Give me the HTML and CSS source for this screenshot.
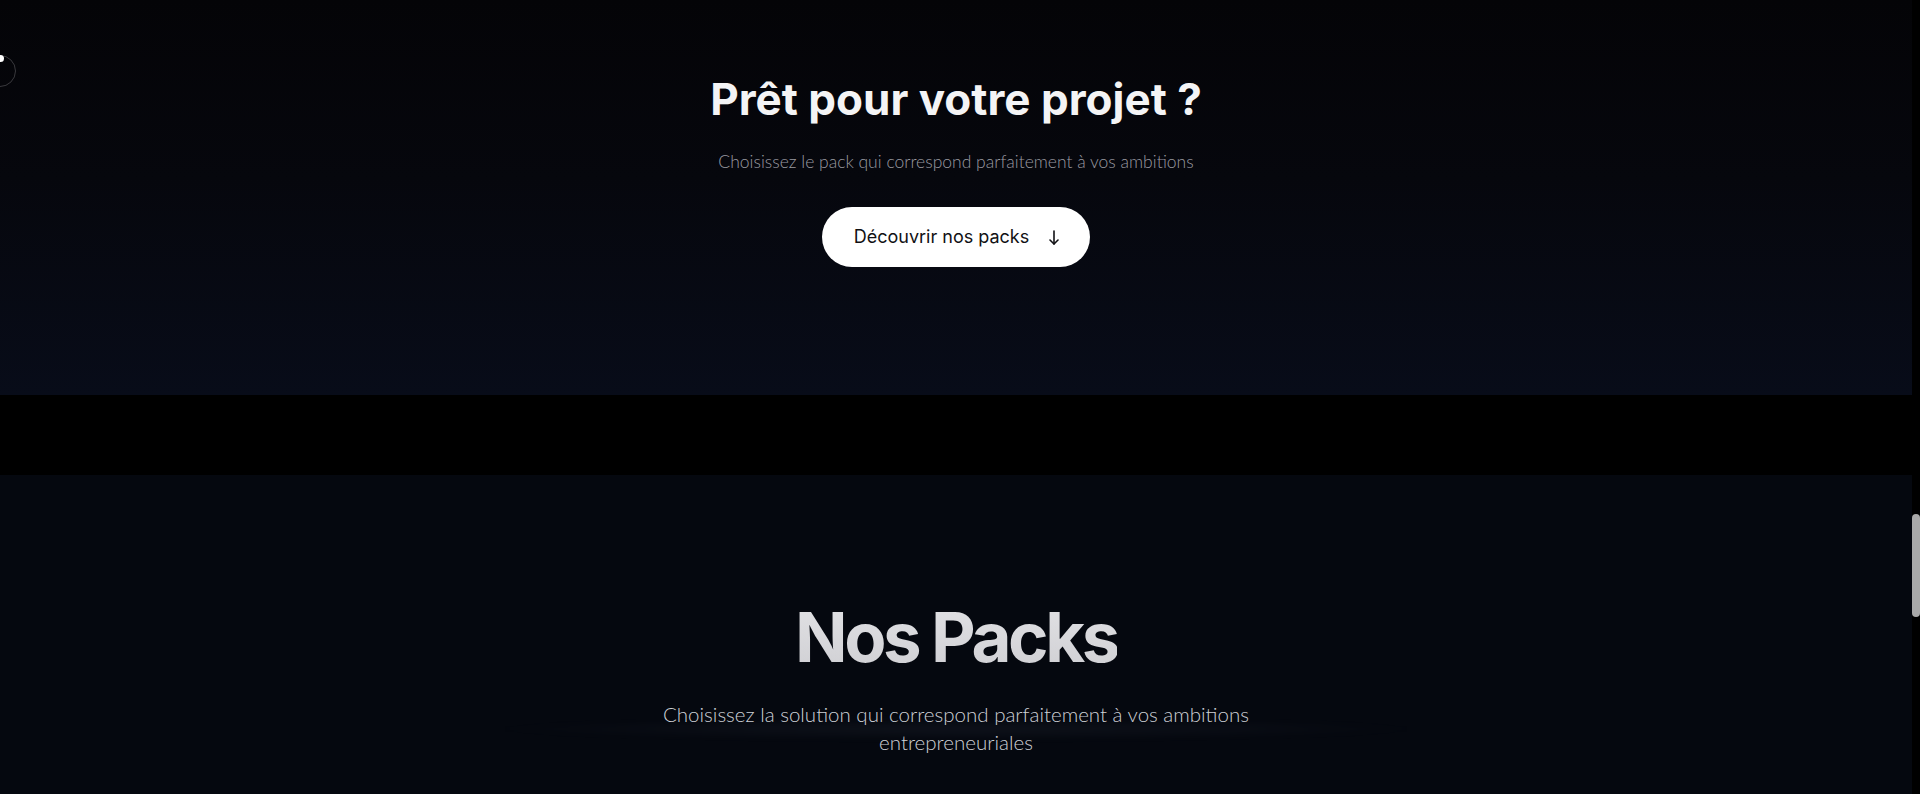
FILE: index.html
```html
<!DOCTYPE html>
<html lang="fr">
<head>
<meta charset="utf-8">
<title>Nos Packs</title>
<link rel="stylesheet" href="styles.css">
</head>
<body>
<div class="page">
  <main class="main">
    <section class="cta">
      <h2 class="cta-title">Prêt pour votre projet ?</h2>
      <p class="cta-sub">Choisissez le pack qui correspond parfaitement à vos ambitions</p>
      <a class="cta-btn" href="#packs">
        <span>Découvrir nos packs</span>
        <svg class="cta-arrow" width="10" height="15" viewBox="0 0 10 15" fill="none" stroke="currentColor" stroke-width="1.6" stroke-linecap="round" stroke-linejoin="round"><path d="M5 1V14"/><path d="M1 10L5 14L9 10"/></svg>
      </a>
    </section>
    <div class="spacer"></div>
    <section class="packs" id="packs">
      <h2 class="packs-title">Nos Packs</h2>
      <div class="packs-sub-wrap">
        <p class="packs-sub">Choisissez la solution qui correspond parfaitement à vos ambitions entrepreneuriales</p>
      </div>
    </section>
  </main>
  <aside class="scrollbar"><div class="thumb"></div></aside>
</div>
<div class="cursor-ring"></div>
<div class="cursor-dot"></div>
</body>
</html>
```
FILE: styles.css
```css
html, body {
  margin: 0;
  padding: 0;
  background: #000;
  height: 794px;
  overflow: hidden;
}

.page {
  display: flex;
  height: 794px;
}

.main {
  flex: 1;
  display: flex;
  flex-direction: column;
  overflow: hidden;
}

.cta {
  height: 395px;
  flex: none;
  box-sizing: border-box;
  padding-top: 73px;
  display: flex;
  flex-direction: column;
  align-items: center;
  background: linear-gradient(to bottom, #040407 0%, #06070d 45%, #080c19 100%);
}

.cta-title {
  margin: 0;
  font-family: "Inter", "Liberation Sans", sans-serif;
  font-weight: 700;
  font-size: 44px;
  line-height: 52px;
  color: #f4f4f5;
}

.cta-sub {
  margin: 23px 0 0;
  font-family: "Lato", "Liberation Sans", sans-serif;
  font-weight: 300;
  font-size: 17.5px;
  line-height: 28px;
  color: #9a9aa1;
}

.cta-btn {
  margin-top: 31px;
  height: 60px;
  box-sizing: border-box;
  padding: 0 31px 0 32px;
  display: flex;
  align-items: center;
  gap: 20px;
  background: #fff;
  border-radius: 999px;
  color: #111114;
  text-decoration: none;
  font-family: "Inter", "Liberation Sans", sans-serif;
  font-weight: 400;
  font-size: 18px;
  line-height: 24px;
}

.cta-arrow {
  display: block;
  flex: none;
}

.spacer {
  height: 80px;
  flex: none;
  background: #000;
}

.packs {
  flex: 1;
  box-sizing: border-box;
  padding-top: 124px;
  display: flex;
  flex-direction: column;
  align-items: center;
  background: #05080f;
}

.packs-title {
  margin: 0;
  font-family: "Inter", "Liberation Sans", sans-serif;
  font-weight: 700;
  font-size: 69px;
  line-height: 76px;
  letter-spacing: -0.05em;
  color: #d8d8db;
  background: linear-gradient(to bottom, #e2e2e5, #cfcfd3);
  -webkit-background-clip: text;
  background-clip: text;
  -webkit-text-fill-color: transparent;
}

.packs-sub-wrap {
  position: relative;
  margin-top: 25px;
  display: flex;
  justify-content: center;
}

.packs-sub-wrap::before {
  content: "";
  position: absolute;
  left: 50%;
  top: 18px;
  width: 940px;
  height: 22px;
  transform: translateX(-50%);
  background: radial-gradient(ellipse at center, rgba(190, 200, 230, 0.055) 0%, rgba(190, 200, 230, 0.025) 45%, rgba(190, 200, 230, 0) 72%);
  filter: blur(3px);
  pointer-events: none;
}

.packs-sub {
  position: relative;
  margin: 0;
  max-width: 672px;
  text-align: center;
  font-family: "Lato", "Liberation Sans", sans-serif;
  font-weight: 300;
  font-size: 20.5px;
  line-height: 28px;
  color: #cdd0d6;
}

.scrollbar {
  width: 8px;
  flex: none;
  background: #000;
}

.thumb {
  margin-top: 514px;
  height: 103px;
  border-radius: 4px;
  background: #a9a9a9;
}

.cursor-ring {
  position: fixed;
  left: -16px;
  top: 55px;
  width: 30px;
  height: 30px;
  border: 1.5px solid #3a3a3e;
  border-radius: 50%;
  pointer-events: none;
}

.cursor-dot {
  position: fixed;
  left: -3px;
  top: 55px;
  width: 7px;
  height: 7px;
  border-radius: 50%;
  background: #fff;
  pointer-events: none;
}
```
